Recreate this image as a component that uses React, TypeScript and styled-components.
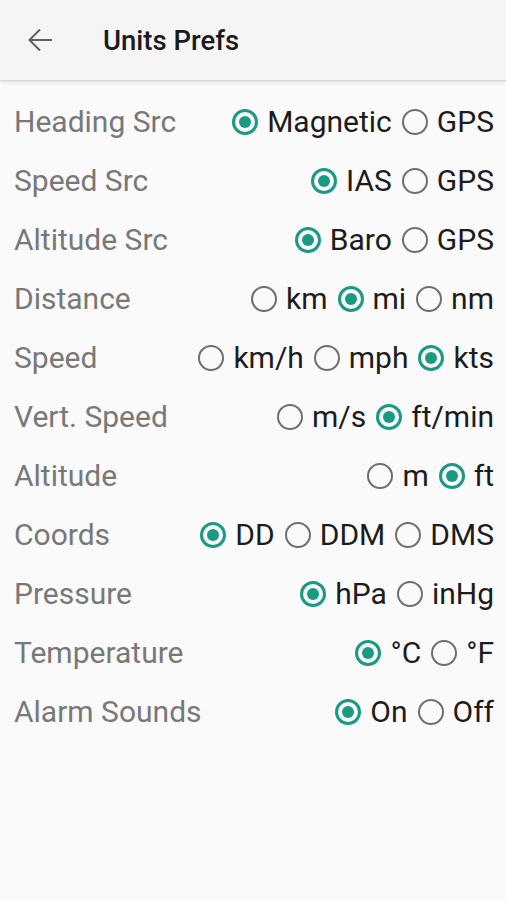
import React, { useState } from 'react';
import styled, { createGlobalStyle } from 'styled-components';

const GlobalStyle = createGlobalStyle`
  html, body {
    margin: 0;
    padding: 0;
    background: #fafafa;
  }
  body {
    font-family: Roboto, "Noto Sans", "Liberation Sans", sans-serif;
    -webkit-font-smoothing: antialiased;
  }
`;

type Pref = {
  key: string;
  label: string;
  options: string[];
  initial: number;
};

const PREFS: Pref[] = [
  { key: 'heading', label: 'Heading Src', options: ['Magnetic', 'GPS'], initial: 0 },
  { key: 'speedSrc', label: 'Speed Src', options: ['IAS', 'GPS'], initial: 0 },
  { key: 'altSrc', label: 'Altitude Src', options: ['Baro', 'GPS'], initial: 0 },
  { key: 'distance', label: 'Distance', options: ['km', 'mi', 'nm'], initial: 1 },
  { key: 'speed', label: 'Speed', options: ['km/h', 'mph', 'kts'], initial: 2 },
  { key: 'vspeed', label: 'Vert. Speed', options: ['m/s', 'ft/min'], initial: 1 },
  { key: 'altitude', label: 'Altitude', options: ['m', 'ft'], initial: 1 },
  { key: 'coords', label: 'Coords', options: ['DD', 'DDM', 'DMS'], initial: 0 },
  { key: 'pressure', label: 'Pressure', options: ['hPa', 'inHg'], initial: 0 },
  { key: 'temp', label: 'Temperature', options: ['°C', '°F'], initial: 0 },
  { key: 'alarm', label: 'Alarm Sounds', options: ['On', 'Off'], initial: 0 },
];

export default function App() {
  const [values, setValues] = useState<Record<string, number>>(() =>
    Object.fromEntries(PREFS.map((p) => [p.key, p.initial]))
  );

  const select = (key: string, idx: number) =>
    setValues((v) => ({ ...v, [key]: idx }));

  return (
    <>
      <GlobalStyle />
      <Screen>
        <Toolbar>
          <BackButton aria-label="Back">
            <svg width="26" height="26" viewBox="0 0 26 26">
              <path
                d="M25 13H2.5M13 2.5L2.5 13 13 23.5"
                fill="none"
                stroke="#616161"
                strokeWidth="2"
              />
            </svg>
          </BackButton>
          <Title>Units Prefs</Title>
        </Toolbar>

        <List>
          {PREFS.map((p) => (
            <Row key={p.key}>
              <Label>{p.label}</Label>
              <Group role="radiogroup">
                {p.options.map((opt, i) => (
                  <Option key={opt} onClick={() => select(p.key, i)}>
                    <Radio $checked={values[p.key] === i} />
                    <OptionText>{opt}</OptionText>
                  </Option>
                ))}
              </Group>
            </Row>
          ))}
        </List>
      </Screen>
    </>
  );
}

const Screen = styled.div`
  width: 506px;
  min-height: 900px;
  background: #fafafa;
`;

const Toolbar = styled.header`
  height: 80px;
  display: flex;
  align-items: center;
  background: #f5f5f5;
  box-shadow: 0 1px 0 #d6d6d6, 0 2px 4px rgba(0, 0, 0, 0.12);
  position: relative;
`;

const BackButton = styled.button`
  width: 80px;
  height: 80px;
  display: flex;
  align-items: center;
  justify-content: center;
  padding: 0;
  margin-right: 23px;
  border: none;
  background: transparent;
  cursor: pointer;
`;

const Title = styled.h1`
  margin: 0;
  font-size: 27.5px;
  font-weight: 500;
  color: #1a1a1a;
`;

const List = styled.div`
  padding: 12px 12px 0 14px;
`;

const Row = styled.div`
  height: 59px;
  display: flex;
  align-items: center;
  justify-content: space-between;
`;

const Label = styled.span`
  font-size: 30px;
  color: #787878;
`;

const Group = styled.div`
  display: flex;
  align-items: center;
  gap: 10px;
`;

const Option = styled.label`
  display: flex;
  align-items: center;
  gap: 9px;
  cursor: pointer;
`;

const Radio = styled.span<{ $checked: boolean }>`
  width: 26px;
  height: 26px;
  box-sizing: border-box;
  border-radius: 50%;
  border: ${({ $checked }) => ($checked ? '3px solid #1b9a83' : '2px solid #6e6e6e')};
  display: flex;
  align-items: center;
  justify-content: center;
  &::after {
    content: '';
    width: 12px;
    height: 12px;
    border-radius: 50%;
    background: #1b9a83;
    display: ${({ $checked }) => ($checked ? 'block' : 'none')};
  }
`;

const OptionText = styled.span`
  font-size: 30px;
  color: #1c1c1c;
`;
